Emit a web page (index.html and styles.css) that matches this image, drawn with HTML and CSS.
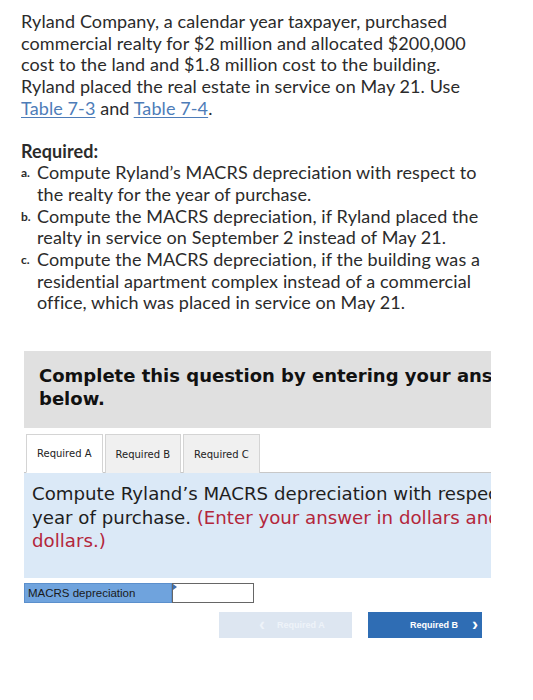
FILE: index.html
```html
<!DOCTYPE html>
<html>
<head>
<meta charset="utf-8">
<link rel="stylesheet" href="styles.css">
</head>
<body>
<div class="page">
  <div class="question">
    <p class="intro">Ryland Company, a calendar year taxpayer, purchased commercial realty for $2 million and allocated $200,000 cost to the land and $1.8 million cost to the building. Ryland placed the real estate in service on May 21. Use <a class="link" href="#">Table 7-3</a> and <a class="link" href="#">Table 7-4</a>.</p>
    <p class="req-title">Required:</p>
    <ol class="req-list">
      <li><span class="marker">a.</span><span>Compute Ryland’s MACRS depreciation with respect to the realty for the year of purchase.</span></li>
      <li><span class="marker">b.</span><span>Compute the MACRS depreciation, if Ryland placed the realty in service on September 2 instead of May 21.</span></li>
      <li><span class="marker">c.</span><span>Compute the MACRS depreciation, if the building was a residential apartment complex instead of a commercial office, which was placed in service on May 21.</span></li>
    </ol>
  </div>

  <div class="answer">
    <div class="banner"><div class="banner-text">Complete this question by entering your answers in the tabs<br>below.</div></div>

    <div class="tabs">
      <div class="tab active">Required A</div>
      <div class="tab">Required B</div>
      <div class="tab">Required C</div>
    </div>

    <div class="panel">
      <div class="panel-text">Compute Ryland’s MACRS depreciation with respect to the realty for the<br>year of purchase. <span class="hint">(Enter your answer in dollars and not in millions of</span><br><span class="hint">dollars.)</span></div>
    </div>

    <div class="entry">
      <div class="entry-label">MACRS depreciation</div>
      <div class="entry-input"><span class="flag"></span></div>
    </div>

    <div class="nav">
      <div class="btn btn-prev"><span class="chev">&lsaquo;</span>Required A</div>
      <div class="btn btn-next">Required B<span class="chev">&rsaquo;</span></div>
    </div>
  </div>
</div>
</body>
</html>
```

FILE: styles.css
```css
* { box-sizing: border-box; }
html, body { margin: 0; padding: 0; background: #fff; }
.page { width: 533px; }

.question {
  padding: 11px 0 0 21px;
  font-family: Lato, "Noto Sans", sans-serif;
  font-size: 18px;
  letter-spacing: 0.1px;
  line-height: 21.7px;
  color: #2b2b2b;
  width: 490px;
}
.intro { margin: 0 0 21px 0; }
.link { color: #4d7cb8; text-decoration: underline; text-underline-offset: 2px; }
.req-title { margin: 0; font-weight: bold; }
.req-list { list-style: none; margin: 0; padding: 0; }
.req-list li { display: flex; }
.marker { width: 16px; flex: none; font-size: 12px; font-weight: bold; letter-spacing: 0; }

.answer { margin: 37px 0 0 24px; width: 467px; }

.banner {
  background: #e0e0e0;
  height: 77px;
  padding: 13px 0 0 15px;
  overflow: hidden;
}
.banner-text {
  font-family: "DejaVu Sans", Verdana, sans-serif;
  font-weight: bold;
  font-size: 18px;
  line-height: 23px;
  color: #111;
  white-space: nowrap;
}

.tabs {
  display: flex;
  margin-top: 6px;
  gap: 2px;
  padding-left: 2px;
  border-bottom: 1px solid #c8c8c8;
}
.tab {
  height: 39px;
  padding: 0 10px;
  display: flex;
  align-items: center;
  font-family: "DejaVu Sans", Verdana, sans-serif;
  font-size: 10px;
  color: #222;
  background: #f0f0f0;
  border: 1px solid #d4d4d4;
  border-bottom: none;
  margin-bottom: -1px;
}
.tab.active { background: #fff; border-bottom: 1px solid #fff; }

.panel {
  background: #dbe9f7;
  height: 105px;
  padding: 9px 0 0 8px;
  overflow: hidden;
}
.panel-text {
  font-family: "DejaVu Sans", Verdana, sans-serif;
  font-size: 18.2px;
  line-height: 23.5px;
  color: #1e1e1e;
  white-space: nowrap;
}
.hint { color: #b3263b; }

.entry { display: flex; margin-top: 5px; height: 20px; }
.entry-label {
  width: 148px;
  background: #6fa3dd;
  font-family: "Liberation Sans", Arial, sans-serif;
  font-size: 11.5px;
  color: #1a1a1a;
  display: flex;
  align-items: center;
  padding-left: 3px;
  border: 1px solid #5b8fcc;
}
.entry-input {
  width: 82px;
  background: #fff;
  border: 1px solid #666;
  position: relative;
}
.flag {
  position: absolute;
  left: 0; top: 0;
  width: 0; height: 0;
  border-top: 3px solid transparent;
  border-bottom: 3px solid transparent;
  border-left: 4px solid #3d6fb0;
}

.nav {
  display: flex;
  justify-content: flex-end;
  gap: 16px;
  margin-top: 9px;
  padding-right: 9px;
}
.btn {
  height: 26px;
  display: flex;
  align-items: center;
  white-space: nowrap;
  font-family: "Liberation Sans", Arial, sans-serif;
  font-weight: bold;
  font-size: 9px;
  color: #fff;
}
.btn-prev { width: 133px; background: #dde6f1; color: #eef3f9; padding-left: 40px; }
.btn-next { width: 114px; background: #2f6db4; padding-left: 42px; }
.chev { font-size: 18px; font-weight: bold; line-height: 1; margin-top: -3px; }
.btn-prev .chev { margin-right: 12px; }
.btn-next .chev { margin-left: 14px; }
```
